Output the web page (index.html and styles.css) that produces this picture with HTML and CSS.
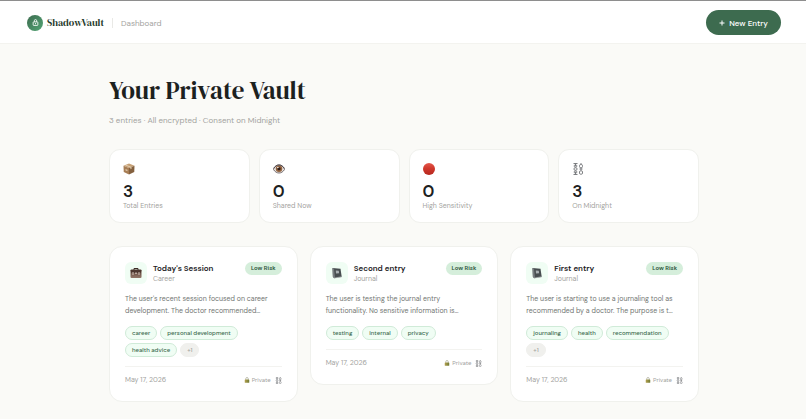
FILE: index.html
```html
<!DOCTYPE html>
<html lang="en">
<head>
<meta charset="utf-8">
<meta name="viewport" content="width=device-width, initial-scale=1">
<title>ShadowVault</title>
<link rel="stylesheet" href="styles.css">
</head>
<body>
<svg class="sprite" aria-hidden="true">
  <defs>
    <linearGradient id="brown" x1="0" y1="0" x2="0" y2="1"><stop offset="0" stop-color="#5b4238"/><stop offset="1" stop-color="#927668"/></linearGradient>
    <linearGradient id="red" x1="0" y1="0" x2="0" y2="1"><stop offset="0" stop-color="#e4574b"/><stop offset=".45" stop-color="#d0382c"/><stop offset="1" stop-color="#b5271e"/></linearGradient>
    <linearGradient id="brass" x1="0" y1="0" x2="1" y2="0"><stop offset="0" stop-color="#b4a04e"/><stop offset="1" stop-color="#6f7a35"/></linearGradient>
  </defs>
  <symbol id="box" viewBox="0 0 24 24">
    <path fill="#c6a075" d="M12 1 23 5.500 12 10 1 5.500z"/>
    <path fill="#a77d54" d="M1 5.500 12 10v13L1.500 18z"/>
    <path fill="#84603e" d="M23 5.500 12 10v13l10.500-5z"/>
    <path fill="#e6d2b4" d="m6 3.500 11 4.400v3.600l-2 .8V8.800L4 4.300z"/>
    <path fill="#dcc6a6" d="m5 12 4 1.600v3L5 15z"/>
  </symbol>
  <symbol id="eye" viewBox="0 0 24 24">
    <path fill="#e9e3df" stroke="#6b6264" stroke-width="1.800" d="M1 13C4 6 8 4 12 4s8 2 11 9c-3 5-7 7-11 7S4 18 1 13z"/>
    <circle cx="12" cy="11.500" r="6.500" fill="#92633f"/>
    <circle cx="12" cy="11.500" r="3.200" fill="#2b1b16"/>
    <circle cx="9.800" cy="9" r="1.500" fill="#fff"/>
    <path fill="none" stroke="#4a4145" stroke-width="2" d="M1 11C4 6 8 4 12 4s8 2 11 7"/>
  </symbol>
  <symbol id="dot" viewBox="0 0 24 24"><circle cx="12" cy="12" r="12" fill="url(#red)"/></symbol>
  <symbol id="chains" viewBox="0 0 24 24">
    <g fill="none" stroke="#77797c" stroke-width="1.900">
      <path d="M3 1h8M7 1v5M3 23h8M7 18v5"/>
      <rect x="4.500" y="4" width="5" height="4" rx="1.500"/>
      <rect x="4" y="9.500" width="6" height="5" rx="2.200"/>
      <rect x="4.500" y="16" width="5" height="4" rx="1.500"/>
      <path d="M18 0v3M18 9v6"/>
      <rect x="15" y="3" width="6" height="6.500" rx="2.500"/>
      <path d="M15 12h6"/>
      <rect x="15" y="15.500" width="6" height="7" rx="2.500"/>
    </g>
  </symbol>
  <symbol id="case" viewBox="0 0 24 24">
    <path fill="none" stroke="#3b2b26" stroke-width="2" d="M8 6V3h8v3"/>
    <rect x="1" y="6" width="22" height="16" rx="2" fill="url(#brown)"/>
    <path fill="#4d372f" d="M1 7q0-2 2-2h18q2 0 2 2l-2 5H3z"/>
    <path fill="#d2c2b8" d="M5 10h2v6H5zM17 10h2v6h-2zM10.500 11h3v3h-3z"/>
  </symbol>
  <symbol id="book" viewBox="0 0 24 24">
    <path fill="#484d50" d="M3 2 19 3.500 21.500 20 6.500 22.500 4 20z"/>
    <path fill="#777c7f" d="M3 2 6 3 8 21.500 6.500 22.500 3.500 19z"/>
    <path fill="#a9afb2" d="m9.500 7 6 .5.700 5-6.200.5z"/>
    <path fill="none" stroke="#c5c8c9" stroke-width="1.200" d="m7 22 14.500-2.500"/>
  </symbol>
  <symbol id="padlock" viewBox="0 0 24 24">
    <path fill="none" stroke="#aaa99a" stroke-width="3" d="M7 11V7a5 5 0 0 1 10 0v4"/>
    <rect x="3" y="10" width="18" height="13" rx="2" fill="url(#brass)"/>
  </symbol>
</svg>

<header class="topbar">
  <a class="brand" href="#">
    <span class="brand-mark">
      <svg viewBox="0 0 24 24" fill="none" stroke="#fff" stroke-width="3" stroke-linejoin="round"><rect x="4" y="10" width="16" height="12" rx="2"/><path d="M8 10V6a4 4 0 0 1 8 0v4M12 14v4"/></svg>
    </span>
    ShadowVault
  </a>
  <span class="crumb">Dashboard</span>
  <button class="new-entry" type="button">
    <svg viewBox="0 0 6 6" aria-hidden="true"><path d="M3 .5v5M.5 3h5" stroke="#fff" stroke-width="1"/></svg>
    New Entry
  </button>
</header>

<main class="content">
  <h1>Your Private Vault</h1>
  <p class="lead">3 entries · All encrypted · Consent on Midnight</p>

  <section class="stats" aria-label="Summary">
    <div class="stat"><svg><use href="#box"/></svg><strong>3</strong><span>Total Entries</span></div>
    <div class="stat"><svg><use href="#eye"/></svg><strong>0</strong><span>Shared Now</span></div>
    <div class="stat"><svg><use href="#dot"/></svg><strong>0</strong><span>High Sensitivity</span></div>
    <div class="stat"><svg><use href="#chains"/></svg><strong>3</strong><span>On Midnight</span></div>
  </section>

  <section class="entries" aria-label="Entries">
    <article class="entry">
      <div class="entry-head">
        <span class="entry-icon"><svg><use href="#case"/></svg></span>
        <div class="entry-title"><h2>Today's Session</h2><p>Career</p></div>
        <span class="risk">Low Risk</span>
      </div>
      <p class="summary">The user's recent session focused on career<br>development. The doctor recommended…</p>
      <ul class="tags"><li>career</li><li>personal development</li><li>health advice</li><li class="more">+1</li></ul>
      <div class="entry-foot"><time datetime="2026-05-17">May 17, 2026</time><span class="privacy"><svg><use href="#padlock"/></svg>Private</span><svg class="chain"><use href="#chains"/></svg></div>
    </article>
    <article class="entry">
      <div class="entry-head">
        <span class="entry-icon"><svg><use href="#book"/></svg></span>
        <div class="entry-title"><h2>Second entry</h2><p>Journal</p></div>
        <span class="risk">Low Risk</span>
      </div>
      <p class="summary">The user is testing the journal entry<br>functionality. No sensitive information is…</p>
      <ul class="tags"><li>testing</li><li>internal</li><li>privacy</li></ul>
      <div class="entry-foot"><time datetime="2026-05-17">May 17, 2026</time><span class="privacy"><svg><use href="#padlock"/></svg>Private</span><svg class="chain"><use href="#chains"/></svg></div>
    </article>
    <article class="entry">
      <div class="entry-head">
        <span class="entry-icon"><svg><use href="#book"/></svg></span>
        <div class="entry-title"><h2>First entry</h2><p>Journal</p></div>
        <span class="risk">Low Risk</span>
      </div>
      <p class="summary">The user is starting to use a journaling tool as<br>recommended by a doctor. The purpose is t…</p>
      <ul class="tags"><li>journaling</li><li>health</li><li>recommendation</li><li class="more">+1</li></ul>
      <div class="entry-foot"><time datetime="2026-05-17">May 17, 2026</time><span class="privacy"><svg><use href="#padlock"/></svg>Private</span><svg class="chain"><use href="#chains"/></svg></div>
    </article>
  </section>
</main>
</body>
</html>
```
FILE: styles.css
```css
:root {
  --sans: "DM Sans", "Open Sans", sans-serif;
  --serif: "DM Serif Display", "Liberation Serif", serif;
  --muted: #a3a3a0;
  --line: #f0f1ed;
}
* { box-sizing: border-box; margin: 0; padding: 0; }
body {
  background: #fafaf7;
  color: #1c211e;
  font: 7px/10px var(--sans);
}
svg { display: block; flex: none; }
.sprite { position: absolute; width: 0; height: 0; }

.topbar {
  display: flex;
  align-items: center;
  padding: 9px 25px 8px 27px;
  background: #fff;
  border-top: 1px solid #8e8e8e;
  border-bottom: 1px solid #f3f3ef;
}
.brand {
  display: flex;
  align-items: center;
  gap: 4px;
  color: #1f3a2c;
  font: 10px/16px var(--serif);
  text-decoration: none;
}
.brand-mark {
  display: grid;
  place-items: center;
  width: 16px;
  height: 16px;
  border-radius: 50%;
  background: linear-gradient(135deg, #3d6b4f, #52a574);
}
.brand-mark svg { width: 7px; height: 7px; }
.crumb {
  margin-left: 8px;
  padding-left: 8px;
  border-left: 1px solid #e9e9e6;
  color: var(--muted);
  font-size: 8px;
}
.new-entry {
  display: flex;
  align-items: center;
  justify-content: center;
  gap: 4px;
  width: 75px;
  height: 25px;
  margin-left: auto;
  border: 0;
  border-radius: 13px;
  background: #3d6b4f;
  color: #fff;
  font: 500 8px/12px var(--sans);
}
.new-entry svg { width: 6px; height: 6px; }

.content {
  max-width: 592px;
  margin: 0 auto;
  padding: 28px 0 17px 2px;
}
h1 { font: 25px/36px var(--serif); }
.lead { margin: 6px 0 23px; color: var(--muted); font-size: 8px; line-height: 12px; }

.stats { display: grid; grid-template-columns: repeat(4, 1fr); gap: 9px; }
.stat {
  display: flex;
  flex-direction: column;
  padding: 13px 13px 11px;
  border: 1px solid var(--line);
  border-radius: 11px;
  background: #fff;
}
.stat svg { width: 12px; height: 12px; }
.stat strong { margin: 7px 0 1px; font-size: 17px; line-height: 18px; font-weight: 600; }
.stat span { color: var(--muted); }

.entries {
  display: grid;
  grid-template-columns: repeat(3, minmax(0, 1fr));
  align-items: start;
  gap: 12px;
  margin-top: 23px;
}
.entry {
  padding: 15px;
  border: 1px solid var(--line);
  border-radius: 13px;
  background: #fff;
}
.entry-head { display: flex; align-items: flex-start; }
.entry-icon {
  display: grid;
  place-items: center;
  width: 22px;
  height: 22px;
  border-radius: 6px;
  background: #f0fdf4;
}
.entry-icon svg { width: 12px; height: 12px; }
.entry-title { flex: 1; margin-left: 6px; }
.entry-title h2 { font-size: 8px; line-height: 12px; font-weight: 600; }
.entry-title p { color: var(--muted); }
.risk {
  padding: 0 6px;
  border-radius: 7px;
  background: #d5eedb;
  color: #295239;
  font-size: 6px;
  line-height: 13px;
  font-weight: 600;
}
.summary { margin: 9px 0; color: #727673; line-height: 12px; white-space: nowrap; }
.tags { display: flex; flex-wrap: wrap; gap: 3px; list-style: none; }
.tags li {
  padding: 0 6px;
  border: 1px solid #d0ebd8;
  border-radius: 7px;
  background: #f0fdf4;
  color: #3d6b4f;
  font-size: 6px;
  line-height: 12px;
  font-weight: 500;
}
.tags .more { border-color: #f0f0ed; background: #f0f0ed; color: var(--muted); }
.entry-foot {
  display: flex;
  align-items: center;
  gap: 4px;
  margin-top: 9px;
  padding-top: 7px;
  border-top: 1px solid #f3f3f0;
  color: var(--muted);
  line-height: 12px;
}
.privacy { display: flex; align-items: center; gap: 2px; margin-left: auto; font-size: 6px; }
.privacy svg { width: 6px; height: 6px; }
.chain { width: 7px; height: 7px; }
```
